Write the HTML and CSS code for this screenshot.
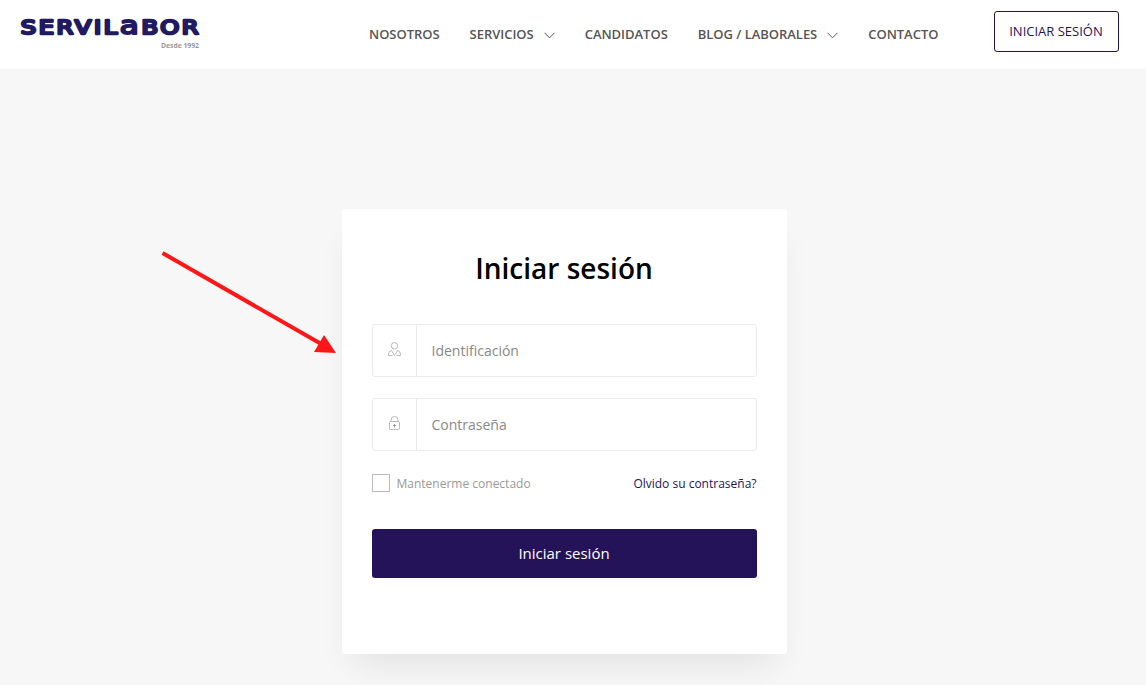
FILE: index.html
```html
<!DOCTYPE html>
<html lang="es">
<head>
<meta charset="utf-8">
<title>Servilabor - Iniciar sesión</title>
<link rel="stylesheet" href="styles.css">
</head>
<body>
<header class="header">
  <a class="logo">
    <svg width="184" height="44" viewBox="0 -8 184 44">
      <text class="logo-name" x="2.200" y="19" transform="scale(1.240 1)" textLength="143.500" lengthAdjust="spacing">SERVIL<tspan class="logo-tall">a</tspan>BOR</text>
      <text class="logo-since" x="143" y="32.500" textLength="38" lengthAdjust="spacingAndGlyphs">Desde 1992</text>
    </svg>
  </a>
  <nav class="nav">
    <a>NOSOTROS</a>
    <a>SERVICIOS<svg class="chevron" width="11" height="7" viewBox="0 0 11 7"><path d="M.5 .8 5.500 5.800 10.500 .8"/></svg></a>
    <a>CANDIDATOS</a>
    <a>BLOG / LABORALES<svg class="chevron" width="11" height="7" viewBox="0 0 11 7"><path d="M.5 .8 5.500 5.800 10.500 .8"/></svg></a>
    <a>CONTACTO</a>
  </nav>
  <a class="login-link">INICIAR SESIÓN</a>
</header>
<main class="main">
  <form class="card">
    <h1 class="title">Iniciar sesión</h1>
    <div class="field">
      <span class="field-icon"><svg width="15" height="15" viewBox="0 0 15 15"><circle cx="7.500" cy="3.800" r="3.200"/><path d="M1.500 13.500V12Q1.700 9 4.500 8.500L7.500 13.500 10.500 8.500Q13.300 9 13.500 12V13.500H9.500M1.500 13.500H5.500"/></svg></span>
      <input class="input" type="text" placeholder="Identificación">
    </div>
    <div class="field">
      <span class="field-icon"><svg width="15" height="15" viewBox="0 0 15 15"><rect x="2.500" y="5.500" width="10" height="8" rx="1"/><path d="M4 5.500V4a3.500 3.500 0 0 1 7 0V5.500"/><path class="keyhole" d="M6 9.500H9M7.500 8V11.500"/></svg></span>
      <input class="input" type="password" placeholder="Contraseña">
    </div>
    <div class="options">
      <label class="remember"><span class="box"></span>Mantenerme conectado</label>
      <a class="forgot">Olvido su contraseña?</a>
    </div>
    <button class="submit" type="button">Iniciar sesión</button>
  </form>
</main>
<svg class="pointer" width="180" height="110" viewBox="0 0 180 110"><path class="shaft" d="M2.500 3 163 95"/><path class="head" d="M164 85 154 102 176 103Z"/></svg>
</body>
</html>
```
FILE: styles.css
```css
* { box-sizing: border-box; }
body {
  margin: 0;
  height: 685px;
  overflow: hidden;
  background: #f7f7f7;
  font-family: "Open Sans", sans-serif;
}
.header {
  display: flex;
  align-items: flex-start;
  height: 69px;
  padding: 0 27px 0 18px;
  background: #fff;
}
.logo { height: 44px; margin-top: 7px; }
.logo svg { display: block; }
.logo-name {
  font: 19.500px "DejaVu Sans", sans-serif;
  fill: #211a60;
  stroke: #211a60;
  stroke-width: 2.500px;
  stroke-linejoin: round;
}
.logo-tall { font-size: 25px; stroke-width: 2px; }
.logo-since { font: bold 7px "Open Sans", sans-serif; fill: #999; }
.nav {
  display: flex;
  gap: 30px;
  margin: 24px 0 0 167px;
  color: #555;
  font-size: 13px;
  font-weight: 600;
  letter-spacing: -.03px;
  line-height: 20px;
  white-space: nowrap;
}
.chevron {
  margin-left: 10px;
  fill: none;
  stroke: #555;
}
.login-link {
  width: 125px;
  height: 41px;
  margin: 11px 0 0 auto;
  padding-right: 1px;
  border: 1px solid #25135a;
  border-radius: 3px;
  color: #25135a;
  font-size: 13px;
  line-height: 39px;
  text-align: center;
}
.main { padding: 140px 0 0 342px; }
.card {
  width: 445px;
  height: 445px;
  padding: 39px 30px 0;
  border-radius: 4px;
  background: #fff;
  box-shadow: 0 20px 34px -11px rgba(0, 0, 0, .09);
}
.title {
  margin: 0 1px 36px 0;
  color: #000;
  font-size: 28px;
  font-weight: 600;
  line-height: 40px;
  text-align: center;
}
.field {
  display: flex;
  height: 53px;
  margin-bottom: 21px;
  border: 1px solid #ebebeb;
  border-radius: 3px;
}
.field-icon {
  width: 44px;
  padding: 17px 0 0 14px;
  border-right: 1px solid #ebebeb;
}
.field-icon svg {
  display: block;
  fill: none;
  stroke: #aaa;
  stroke-width: .8px;
}
.field-icon .keyhole { stroke: #888; }
.input {
  flex: 1;
  min-width: 0;
  padding: 0 14.500px;
  border: 0;
  background: transparent;
  font: 14px "Open Sans", sans-serif;
}
.input::placeholder { color: #888; }
.options {
  display: flex;
  justify-content: space-between;
  height: 20px;
  margin-top: 23px;
  font-size: 12px;
  line-height: 20px;
}
.remember { display: flex; gap: 6.500px; color: #999; }
.box { width: 18px; height: 18px; border: 1px solid #bbb; }
.forgot { margin-right: .5px; color: #25135a; }
.submit {
  width: 100%;
  height: 49px;
  margin-top: 35px;
  padding: 0 1px 2px 0;
  border: 0;
  border-radius: 3px;
  background: #25135a;
  color: #fff;
  font: 15px "Open Sans", sans-serif;
}
.pointer { position: absolute; left: 160px; top: 250px; }
.shaft { stroke: #ff1616; stroke-width: 4px; }
.head { fill: #ff1616; }
```
